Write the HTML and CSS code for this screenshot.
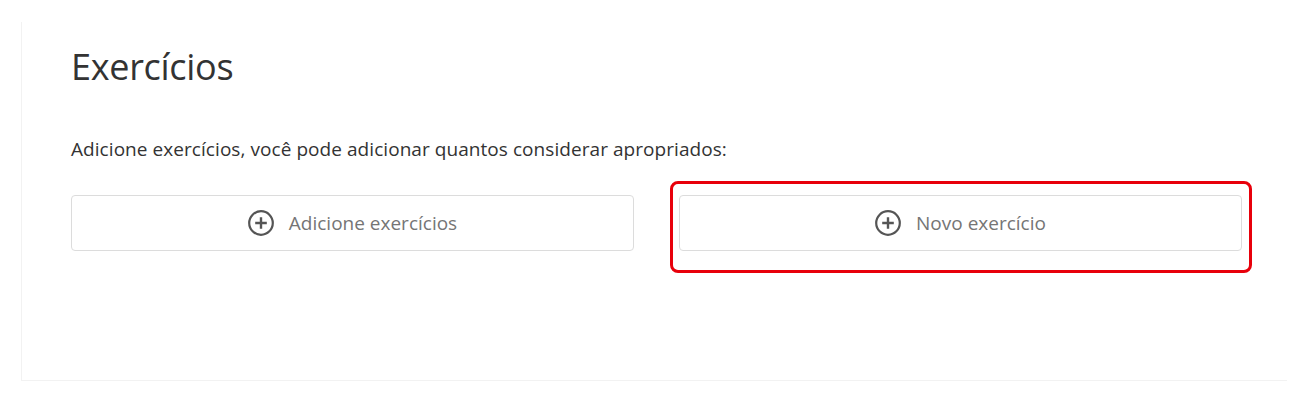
FILE: index.html
```html
<!DOCTYPE html>
<html lang="pt-BR">
<head>
<meta charset="utf-8">
<title>Exercícios</title>
<link rel="stylesheet" href="styles.css">
</head>
<body>
<div class="page">
  <section class="card">
    <h1 class="title">Exercícios</h1>
    <p class="intro">Adicione exercícios, você pode adicionar quantos considerar apropriados:</p>
    <div class="actions">
      <button class="btn" type="button">
        <svg class="icon" viewBox="0 0 26 26" width="26" height="26" aria-hidden="true">
          <circle cx="13" cy="13" r="11.8" fill="none" stroke="#555" stroke-width="2.2"/>
          <path d="M13 7.2v11.6M7.2 13h11.6" stroke="#555" stroke-width="2.4" stroke-linecap="butt"/>
        </svg>
        <span>Adicione exercícios</span>
      </button>
      <div class="highlight-wrap">
        <button class="btn" type="button">
          <svg class="icon" viewBox="0 0 26 26" width="26" height="26" aria-hidden="true">
            <circle cx="13" cy="13" r="11.8" fill="none" stroke="#555" stroke-width="2.2"/>
            <path d="M13 7.2v11.6M7.2 13h11.6" stroke="#555" stroke-width="2.4" stroke-linecap="butt"/>
          </svg>
          <span>Novo exercício</span>
        </button>
        <div class="highlight"></div>
      </div>
    </div>
  </section>
</div>
</body>
</html>
```

FILE: styles.css
```css
* { box-sizing: border-box; }
html, body {
  margin: 0;
  padding: 0;
  background: #ffffff;
}
body {
  font-family: "Open Sans", "Noto Sans", "Liberation Sans", sans-serif;
  color: #333333;
}
.page {
  padding: 22px 14px 0 21px;
}
.card {
  height: 359px;
  border-left: 1px solid #f2f2f2;
  border-bottom: 1px solid #f2f2f2;
  padding: 22px 44px 0 49px;
}
.title {
  margin: 0;
  font-size: 36px;
  font-weight: 400;
  line-height: 46px;
  color: #333333;
  letter-spacing: -0.3px;
}
.intro {
  margin: 46px 0 0 0;
  font-size: 19px;
  line-height: 26px;
  color: #333333;
  letter-spacing: 0.06px;
}
.actions {
  margin-top: 33px;
  display: grid;
  grid-template-columns: 563px 563px;
  column-gap: 45px;
}
.btn {
  width: 100%;
  height: 56px;
  display: flex;
  align-items: center;
  justify-content: center;
  gap: 15px;
  background: #ffffff;
  border: 1px solid #dcdcdc;
  border-radius: 4px;
  font-family: inherit;
  font-size: 19px;
  color: #757575;
  padding: 0;
  cursor: pointer;
}
.icon {
  display: block;
  flex: none;
}
.highlight-wrap {
  position: relative;
}
.highlight {
  position: absolute;
  left: -9px;
  top: -14px;
  right: -10px;
  bottom: -22px;
  border: 3px solid #e8000b;
  border-radius: 8px;
  pointer-events: none;
}
```
